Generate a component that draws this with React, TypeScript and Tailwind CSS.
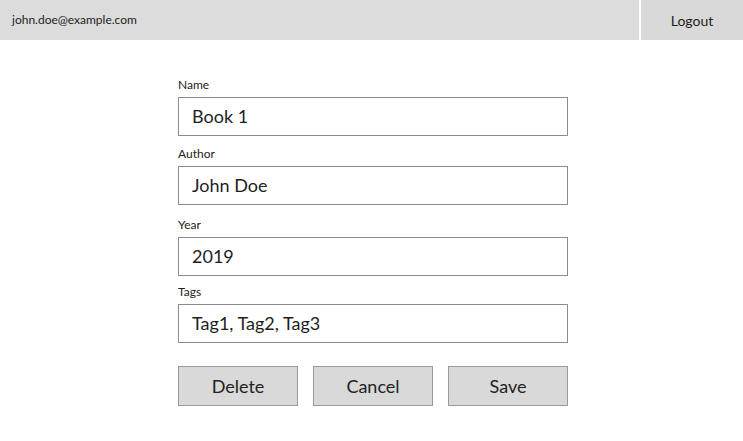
import React from 'react';

// Book edit form — header with user email + logout, and a simple form below
const fields = [
    { label: 'Name', value: 'Book 1', gap: 'mt-0' },
    { label: 'Author', value: 'John Doe', gap: 'mt-[11px]' },
    { label: 'Year', value: '2019', gap: 'mt-[13px]' },
    { label: 'Tags', value: 'Tag1, Tag2, Tag3', gap: 'mt-[9px]' },
];

function Field({ label, value, gap }: { label: string; value: string; gap: string }) {
    return (
        <div className={`flex flex-col ${gap}`}>
            <label className="text-[12px] leading-[14px] mb-[5px] text-[#222]">{label}</label>
            <div className="h-[39px] border border-[#8c8c8c] flex items-center pl-[13px] text-[18px] text-[#1e1e1e]">
                {value}
            </div>
        </div>
    );
}

export default function App() {
    return (
        <div className="w-[743px] h-[441px] bg-white font-['Lato','Noto_Sans',sans-serif]">
            <header className="flex h-10">
                <div className="flex-1 bg-[#dcdcdc] flex items-center pl-3 text-[12px] text-[#222]">
                    john.doe@example.com
                </div>
                <div className="w-[2px] bg-white" />
                <button className="w-[102px] bg-[#d9d9d9] flex items-center justify-center text-[14px] text-[#222]">
                    Logout
                </button>
            </header>

            <main className="pl-[178px] pt-[38px]">
                <div className="w-[390px] flex flex-col">
                    {fields.map((f) => (
                        <Field key={f.label} label={f.label} value={f.value} gap={f.gap} />
                    ))}
                </div>
                <div className="w-[390px] flex justify-between mt-[23px]">
                    {['Delete', 'Cancel', 'Save'].map((b) => (
                        <button
                            key={b}
                            className="w-[120px] h-10 bg-[#d9d9d9] border border-[#9a9a9a] text-[18px] text-[#222]"
                        >
                            {b}
                        </button>
                    ))}
                </div>
            </main>
        </div>
    );
}
